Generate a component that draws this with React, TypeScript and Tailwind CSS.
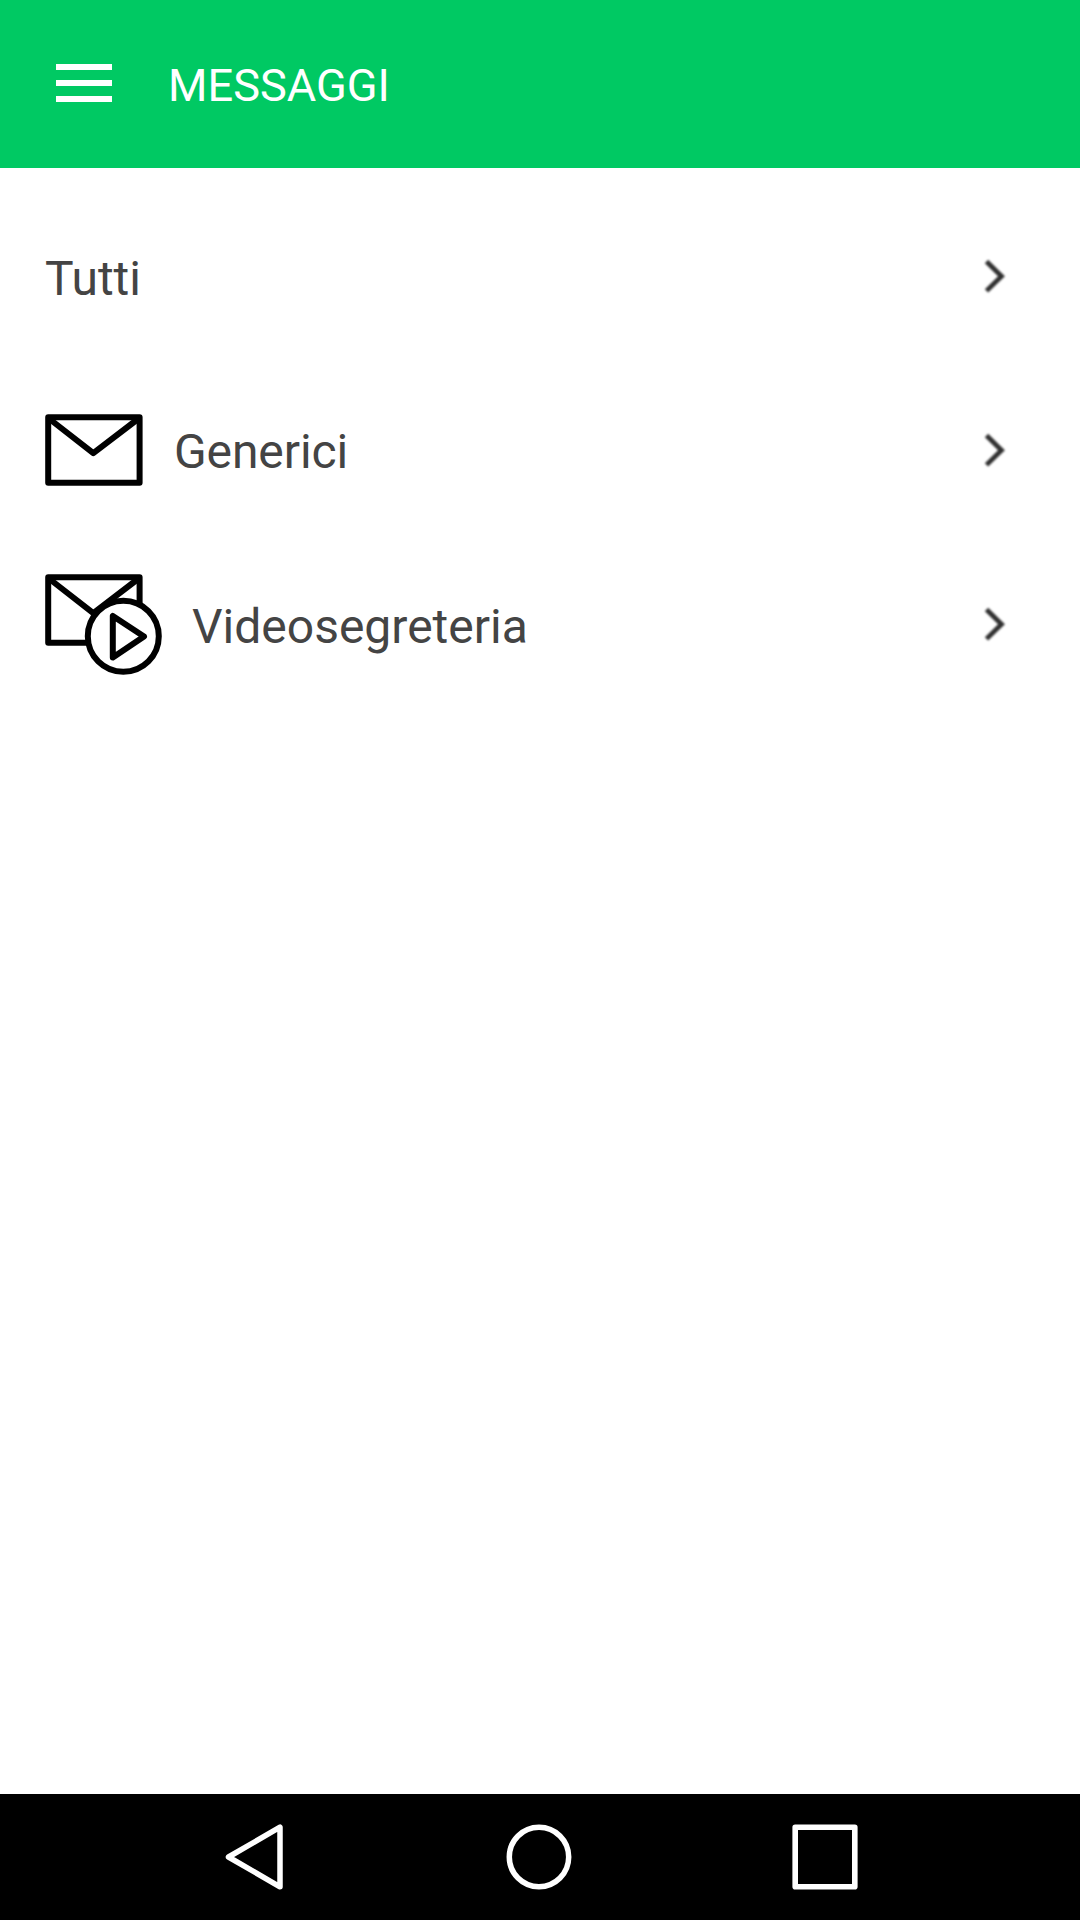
import type { ReactNode } from "react";

function EnvelopeIcon() {
  return (
    <svg
      width="98"
      height="72"
      viewBox="0 0 98 72"
      fill="none"
      stroke="#000"
      strokeWidth="6"
      strokeLinejoin="round"
      className="shrink-0"
    >
      <rect x="3.2" y="3.2" width="91.4" height="65.6" />
      <path d="M4.5 5 48.3 39.2 93 5" />
    </svg>
  );
}

function VideoMessageIcon() {
  return (
    <svg
      width="117"
      height="101"
      viewBox="0 0 117 101"
      fill="none"
      stroke="#000"
      strokeWidth="6"
      strokeLinejoin="round"
      className="shrink-0"
    >
      <rect x="3.2" y="3.2" width="91.4" height="65.6" />
      <path d="M4.5 5 48.3 39.2 93 5" />
      <circle cx="78.3" cy="62.3" r="35.5" fill="#fff" />
      <path d="M67.8 42v41.5l31.2-21z" />
    </svg>
  );
}

function ChevronIcon() {
  return (
    <svg
      width="26"
      height="36"
      viewBox="0 0 26 36"
      fill="none"
      stroke="#303030"
      strokeWidth="4.8"
      className="shrink-0 blur-[0.8px]"
    >
      <path d="M3.5 3.5l15 14.7-15 14.7" />
    </svg>
  );
}

function MessageRow({
  label,
  icon,
  labelClassName = "pt-1.5",
}: {
  label: string;
  icon?: ReactNode;
  labelClassName?: string;
}) {
  return (
    <button className="flex h-[174px] w-full items-center justify-between pl-[45px] pr-[71px]">
      <div className="flex items-center">
        {icon}
        <p className={`text-5xl text-[#444] ${labelClassName}`}>{label}</p>
      </div>
      <ChevronIcon />
    </button>
  );
}

export default function App() {
  return (
    <section className="flex h-[1920px] w-[1080px] flex-col bg-white font-['Roboto',sans-serif]">
      <header className="flex h-[168px] items-center bg-[#00c963] pl-14">
        <button className="flex w-14 flex-col gap-2.5">
          <span className="-mt-0.5 h-1.5 bg-white" />
          <span className="h-1.5 bg-white" />
          <span className="h-1.5 bg-white" />
        </button>
        <h1 className="pl-14 pt-1 text-[45.2px] text-white">MESSAGGI</h1>
      </header>
      <main className="flex-1 pt-[21px]">
        <MessageRow label="Tutti" />
        <MessageRow
          label="Generici"
          labelClassName="pt-1 tracking-[-0.1px]"
          icon={
            <div className="w-[129px]">
              <EnvelopeIcon />
            </div>
          }
        />
        <MessageRow
          label="Videosegreteria"
          icon={
            <div className="w-[147px]">
              <VideoMessageIcon />
            </div>
          }
        />
      </main>
      <nav className="flex h-[126px] items-center bg-black pl-[225px]">
        <svg width="59" height="66" viewBox="0 0 59 66" fill="none" stroke="#fff" strokeWidth="5.5" strokeLinejoin="round">
          <path d="M3.5 33 55 3.2v59.6z" />
        </svg>
        <svg width="66" height="66" viewBox="0 0 66 66" fill="none" stroke="#fff" strokeWidth="5.5" className="ml-[222px]">
          <circle cx="33" cy="33" r="29.7" />
        </svg>
        <svg width="66" height="66" viewBox="0 0 66 66" fill="none" stroke="#fff" strokeWidth="5.6" strokeLinejoin="round" className="ml-[220px]">
          <rect x="3.2" y="3.2" width="59.6" height="59.6" />
        </svg>
      </nav>
    </section>
  );
}
